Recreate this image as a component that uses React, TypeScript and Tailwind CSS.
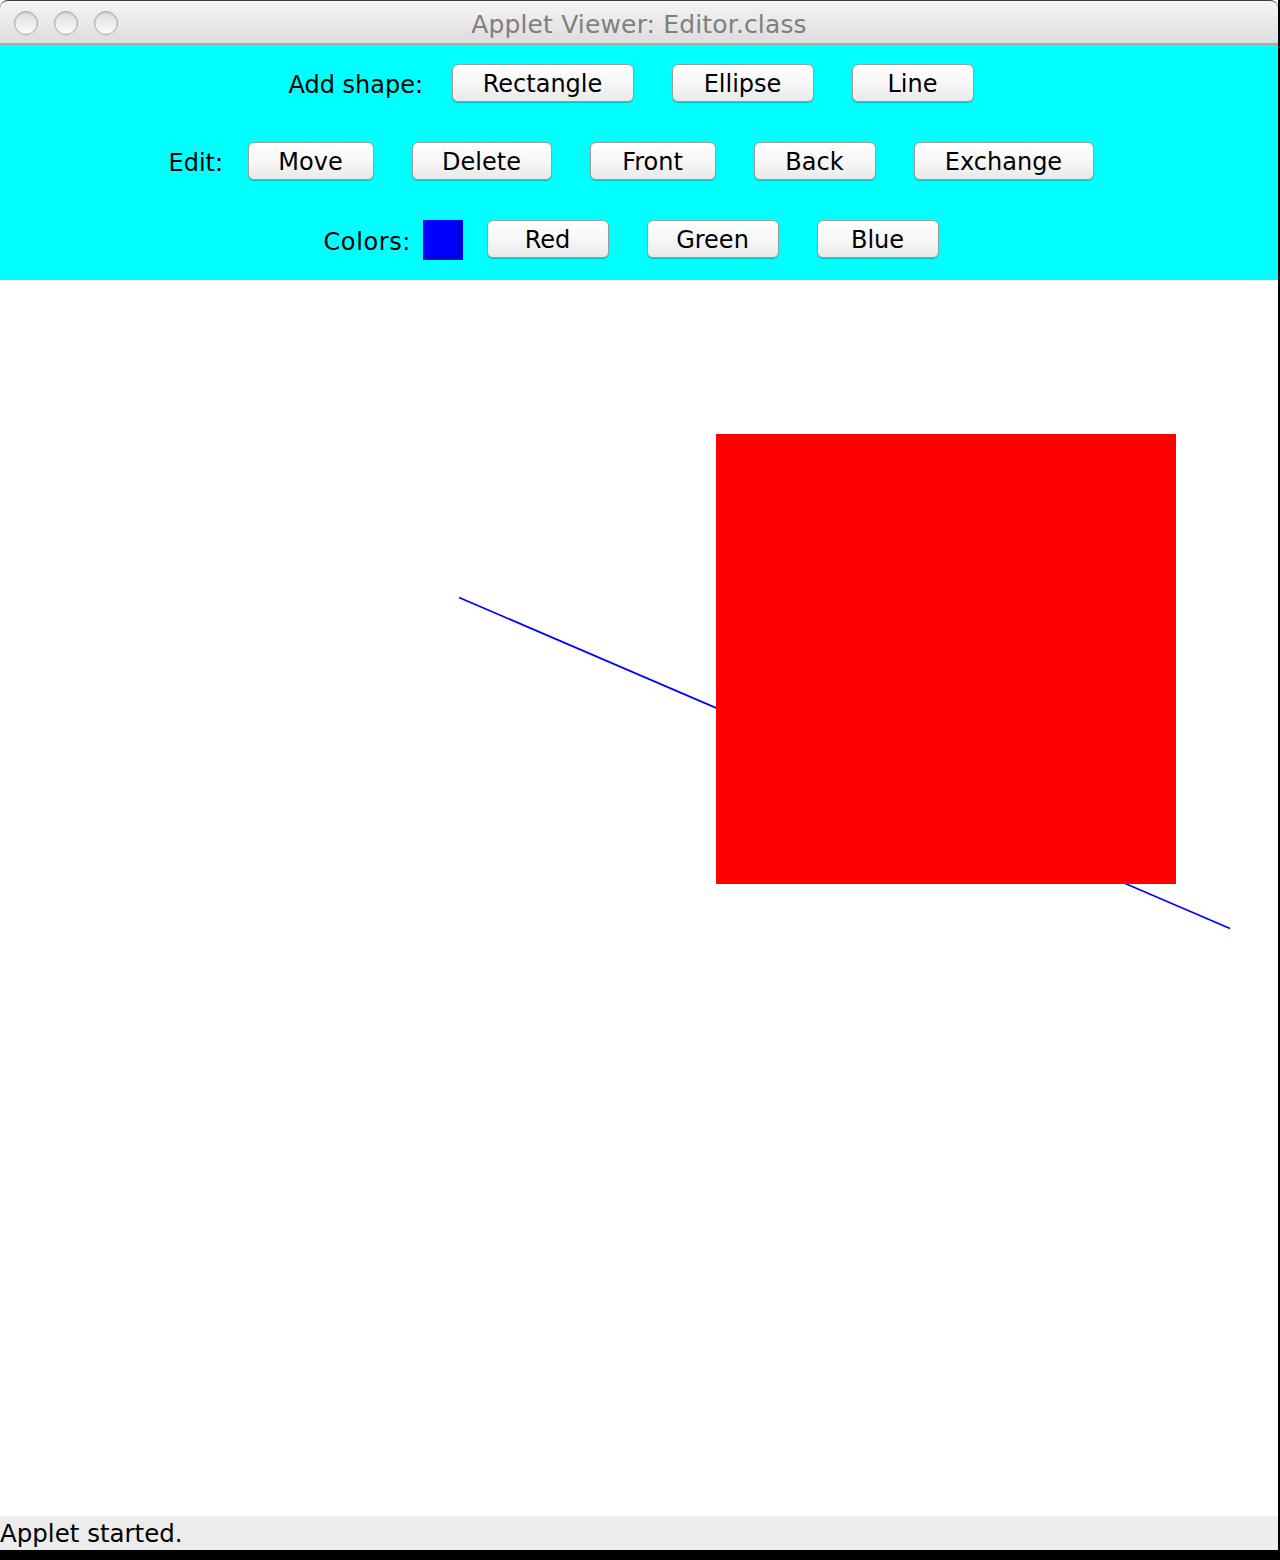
import React from 'react';

const FONT = { fontFamily: '"DejaVu Sans", "Liberation Sans", sans-serif' };

// Java FlowLayout rows of the applet: label, then Aqua-style buttons
const AquaButton: React.FC<{ label: string; w: string }> = ({ label, w }) => (
  <div
    className={`${w} h-[38px] shrink-0 flex items-center justify-center rounded-[6px] border border-[#9c9c9c] bg-gradient-to-b from-white via-[#f7f7f7] to-[#e9e9e9] shadow-[0_1px_1px_rgba(0,0,0,0.25)] text-[24px] text-black leading-none pt-[2px]`}
  >
    {label}
  </div>
);

const TrafficLight: React.FC = () => (
  <div className="w-[24px] h-[24px] rounded-full border border-[#a6a6a6] bg-gradient-to-b from-[#dedede] to-[#fbfbfb] shadow-[inset_0_1px_2px_rgba(0,0,0,0.12)]" />
);

export default function App() {
  return (
    <div className="w-[1280px] h-[1560px] bg-black overflow-hidden" style={FONT}>
      <div className="w-[1278px] h-[1550px] flex flex-col bg-white">
        {/* Title bar */}
        <div className="h-[45px] shrink-0 flex items-center relative border-t border-t-[#3c3c3c] border-b-2 border-b-[#a9a9a9] bg-gradient-to-b from-[#f5f5f5] to-[#dddddd] rounded-t-[8px]">
          <div className="flex gap-[16px] pl-[14px] pt-[2px]">
            <TrafficLight />
            <TrafficLight />
            <TrafficLight />
          </div>
          <div className="absolute inset-0 flex items-center justify-center text-[25px] text-[#7f7f7f] pt-[5px] tracking-[0.15px]">
            Applet Viewer: Editor.class
          </div>
        </div>

        {/* Control panel */}
        <div className="h-[235px] shrink-0 bg-[#00ffff] pt-[19px] flex flex-col gap-[40px] pr-[16px]">
          <div className="h-[38px] flex items-center justify-center">
            <span className="w-[137px] mr-[26px] text-[24px] text-black whitespace-nowrap pt-[3px]">Add shape:</span>
            <div className="flex gap-[38px]">
              <AquaButton label="Rectangle" w="w-[182px]" />
              <AquaButton label="Ellipse" w="w-[142px]" />
              <AquaButton label="Line" w="w-[122px]" />
            </div>
          </div>
          <div className="h-[38px] flex items-center justify-center">
            <span className="w-[54px] mr-[25px] text-[24px] text-black whitespace-nowrap pt-[3px]">Edit:</span>
            <div className="flex gap-[38px]">
              <AquaButton label="Move" w="w-[126px]" />
              <AquaButton label="Delete" w="w-[140px]" />
              <AquaButton label="Front" w="w-[126px]" />
              <AquaButton label="Back" w="w-[122px]" />
              <AquaButton label="Exchange" w="w-[180px]" />
            </div>
          </div>
          <div className="h-[38px] flex items-start justify-center">
            <span className="w-[88px] mr-[11px] h-[38px] flex items-center text-[24px] text-black whitespace-nowrap pt-[5px] tracking-[0.6px]">Colors:</span>
            <div className="w-[40px] h-[40px] mr-[24px] shrink-0 bg-[#0000ff]">
              <div className="w-[37px] h-[37px] border-r-2 border-b-2 border-[#0000b4]" />
            </div>
            <div className="flex gap-[38px]">
              <AquaButton label="Red" w="w-[122px]" />
              <AquaButton label="Green" w="w-[132px]" />
              <AquaButton label="Blue" w="w-[122px]" />
            </div>
          </div>
        </div>

        {/* Drawing canvas */}
        <div className="flex-1 relative bg-white">
          <svg className="absolute inset-0" width="1278" height="1236" viewBox="0 0 1278 1236">
            <line x1="459" y1="317.5" x2="1230" y2="648.5" stroke="#0000ff" strokeWidth="1.8" />
            <rect x="716" y="154" width="460" height="450" fill="#ff0000" />
          </svg>
        </div>

        {/* Status bar */}
        <div className="h-[34px] shrink-0 bg-[#ececec] flex items-center text-[24.5px] text-black leading-none pt-[2px]">
          Applet started.
        </div>
      </div>
    </div>
  );
}
